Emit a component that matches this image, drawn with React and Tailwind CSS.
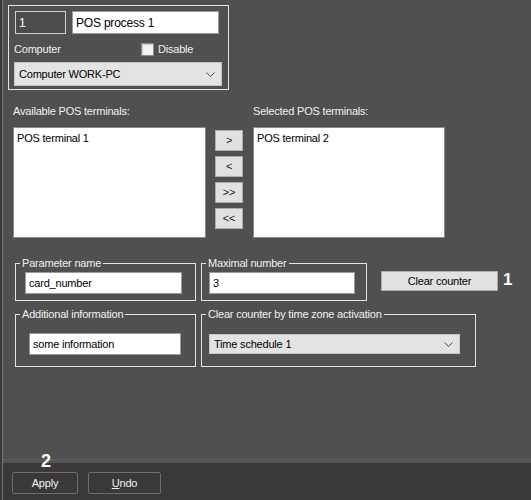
import { useState } from 'react'

const FONT = "font-['Liberation_Sans',Arial,sans-serif] text-[11px] tracking-[-0.2px]"

function Chevron() {
  return (
    <svg width="9" height="5" viewBox="0 0 9 5" aria-hidden>
      <path d="M0.5 0.5 L4.5 4.5 L8.5 0.5" stroke="#4a4a4a" strokeWidth="1" fill="none" />
    </svg>
  )
}

function Group({ legend, className, children }) {
  return (
    <div className={['relative border border-[#e4e4e4]', className].join(' ')}>
      <span className="absolute -top-[8px] left-[4px] bg-[#505050] px-[2px] leading-[14px] text-[#f0f0f0]">
        {legend}
      </span>
      {children}
    </div>
  )
}

function ArrowButton({ label }) {
  return (
    <button
      type="button"
      className="flex h-[21px] w-[28px] items-center justify-center border border-[#adadad] bg-[#e1e1e1] leading-none text-[#222]"
    >
      {label}
    </button>
  )
}

export default function App() {
  const [disabled, setDisabled] = useState(false)

  return (
    <div className={`flex h-[500px] w-[531px] overflow-hidden bg-[#3a3a3a] pl-[2px] ${FONT}`}>
      <div className="relative flex flex-1 flex-col border-l border-[#767676] bg-[#505050] text-[#f0f0f0]">
        <div className="h-[459px]">
          {/* process header */}
          <div className="ml-[5px] mt-[5px] h-[85px] w-[221px] border border-[#e6e6e6] pl-[6px] pt-[5px]">
            <div className="flex gap-[6px]">
              <div className="flex h-[23px] w-[51px] items-center border border-[#cfcfcf] bg-[#4c4c4c] pl-[3px] text-[12px] text-white">
                1
              </div>
              <div className="flex h-[23px] w-[147px] items-center border border-[#9a9a9a] bg-white pl-[3px] text-[12px] text-black">
                POS process 1
              </div>
            </div>
            <div className="-ml-px mt-[9px] flex h-[13px] items-center">
              <span className="w-[127px]">Computer</span>
              <button
                type="button"
                onClick={() => setDisabled(!disabled)}
                className="h-[13px] w-[13px] border border-[#8e8e8e] bg-[#f2f2f2] shadow-[inset_1px_1px_0_#c9c9c9]"
                aria-pressed={disabled}
              />
              <span className="ml-[4px]">Disable</span>
            </div>
            <div className="-ml-px mt-[6px] flex h-[24px] w-[208px] items-center justify-between border border-[#c6c6c6] bg-[#e3e3e3] pl-[4px] pr-[6px] text-black">
              <span>Computer WORK-PC</span>
              <Chevron />
            </div>
          </div>

          {/* terminals */}
          <div className="ml-[10px] mt-[14px] flex items-start">
            <div className="w-[193px]">
              <div className="h-[14px] leading-[14px]">Available POS terminals:</div>
              <div className="mt-[9px] h-[111px] border border-[#8a8a8a] bg-white pl-[3px] pt-[2px] text-black">
                POS terminal 1
              </div>
            </div>
            <div className="ml-[9px] flex flex-col gap-[5px] pt-[26px]">
              <ArrowButton label=">" />
              <ArrowButton label="<" />
              <ArrowButton label=">>" />
              <ArrowButton label="<<" />
            </div>
            <div className="ml-[10px] w-[192px]">
              <div className="h-[14px] leading-[14px]">Selected POS terminals:</div>
              <div className="mt-[9px] h-[111px] border border-[#8a8a8a] bg-white pl-[3px] pt-[2px] text-black">
                POS terminal 2
              </div>
            </div>
          </div>

          {/* counter settings */}
          <div className="ml-[12px] mt-[25px] flex items-start">
            <Group legend="Parameter name" className="h-[38px] w-[181px] pl-[9px] pt-[8px]">
              <div className="flex h-[22px] w-[157px] items-center border border-[#9a9a9a] bg-white pl-[3px] text-black">
                card_number
              </div>
            </Group>
            <Group legend="Maximal number" className="ml-[5px] h-[38px] w-[166px] pl-[7px] pt-[8px]">
              <div className="flex h-[22px] w-[146px] items-center border border-[#9a9a9a] bg-white pl-[3px] text-black">
                3
              </div>
            </Group>
            <button
              type="button"
              className="ml-[14px] mt-[8px] h-[20px] w-[117px] border border-[#adadad] bg-[#e1e1e1] text-black"
            >
              Clear counter
            </button>
            <span className="ml-[5px] mt-[7px] text-[17px] font-bold leading-[20px] text-white">1</span>
          </div>

          <div className="ml-[12px] mt-[13px] flex items-start">
            <Group legend="Additional information" className="h-[53px] w-[181px] pl-[13px] pt-[18px]">
              <div className="flex h-[22px] w-[152px] items-center border border-[#9a9a9a] bg-white pl-[3px] text-black">
                some information
              </div>
            </Group>
            <Group
              legend="Clear counter by time zone activation"
              className="ml-[5px] h-[53px] w-[275px] pl-[7px] pt-[19px]"
            >
              <div className="flex h-[20px] w-[251px] items-center justify-between border border-[#c6c6c6] bg-[#e3e3e3] pl-[4px] pr-[6px] text-black">
                <span>Time schedule 1</span>
                <Chevron />
              </div>
            </Group>
          </div>
        </div>

        <div className="h-[4px] border-t border-[#606060] bg-[#545454]" />
        <div className="flex h-[37px] gap-[10px] bg-[#3a3839] pl-[9px] pt-[9px]">
          <button
            type="button"
            className="h-[22px] w-[66px] rounded-[2px] border border-[#6e6e6e] text-[#f2f2f2]"
          >
            Apply
          </button>
          <button
            type="button"
            className="h-[22px] w-[73px] rounded-[2px] border border-[#6e6e6e] text-[#f2f2f2]"
          >
            <span className="underline">U</span>ndo
          </button>
        </div>

        <span className="absolute left-[38px] top-[451px] text-[18px] font-bold leading-[20px] text-white">2</span>
      </div>
    </div>
  )
}
